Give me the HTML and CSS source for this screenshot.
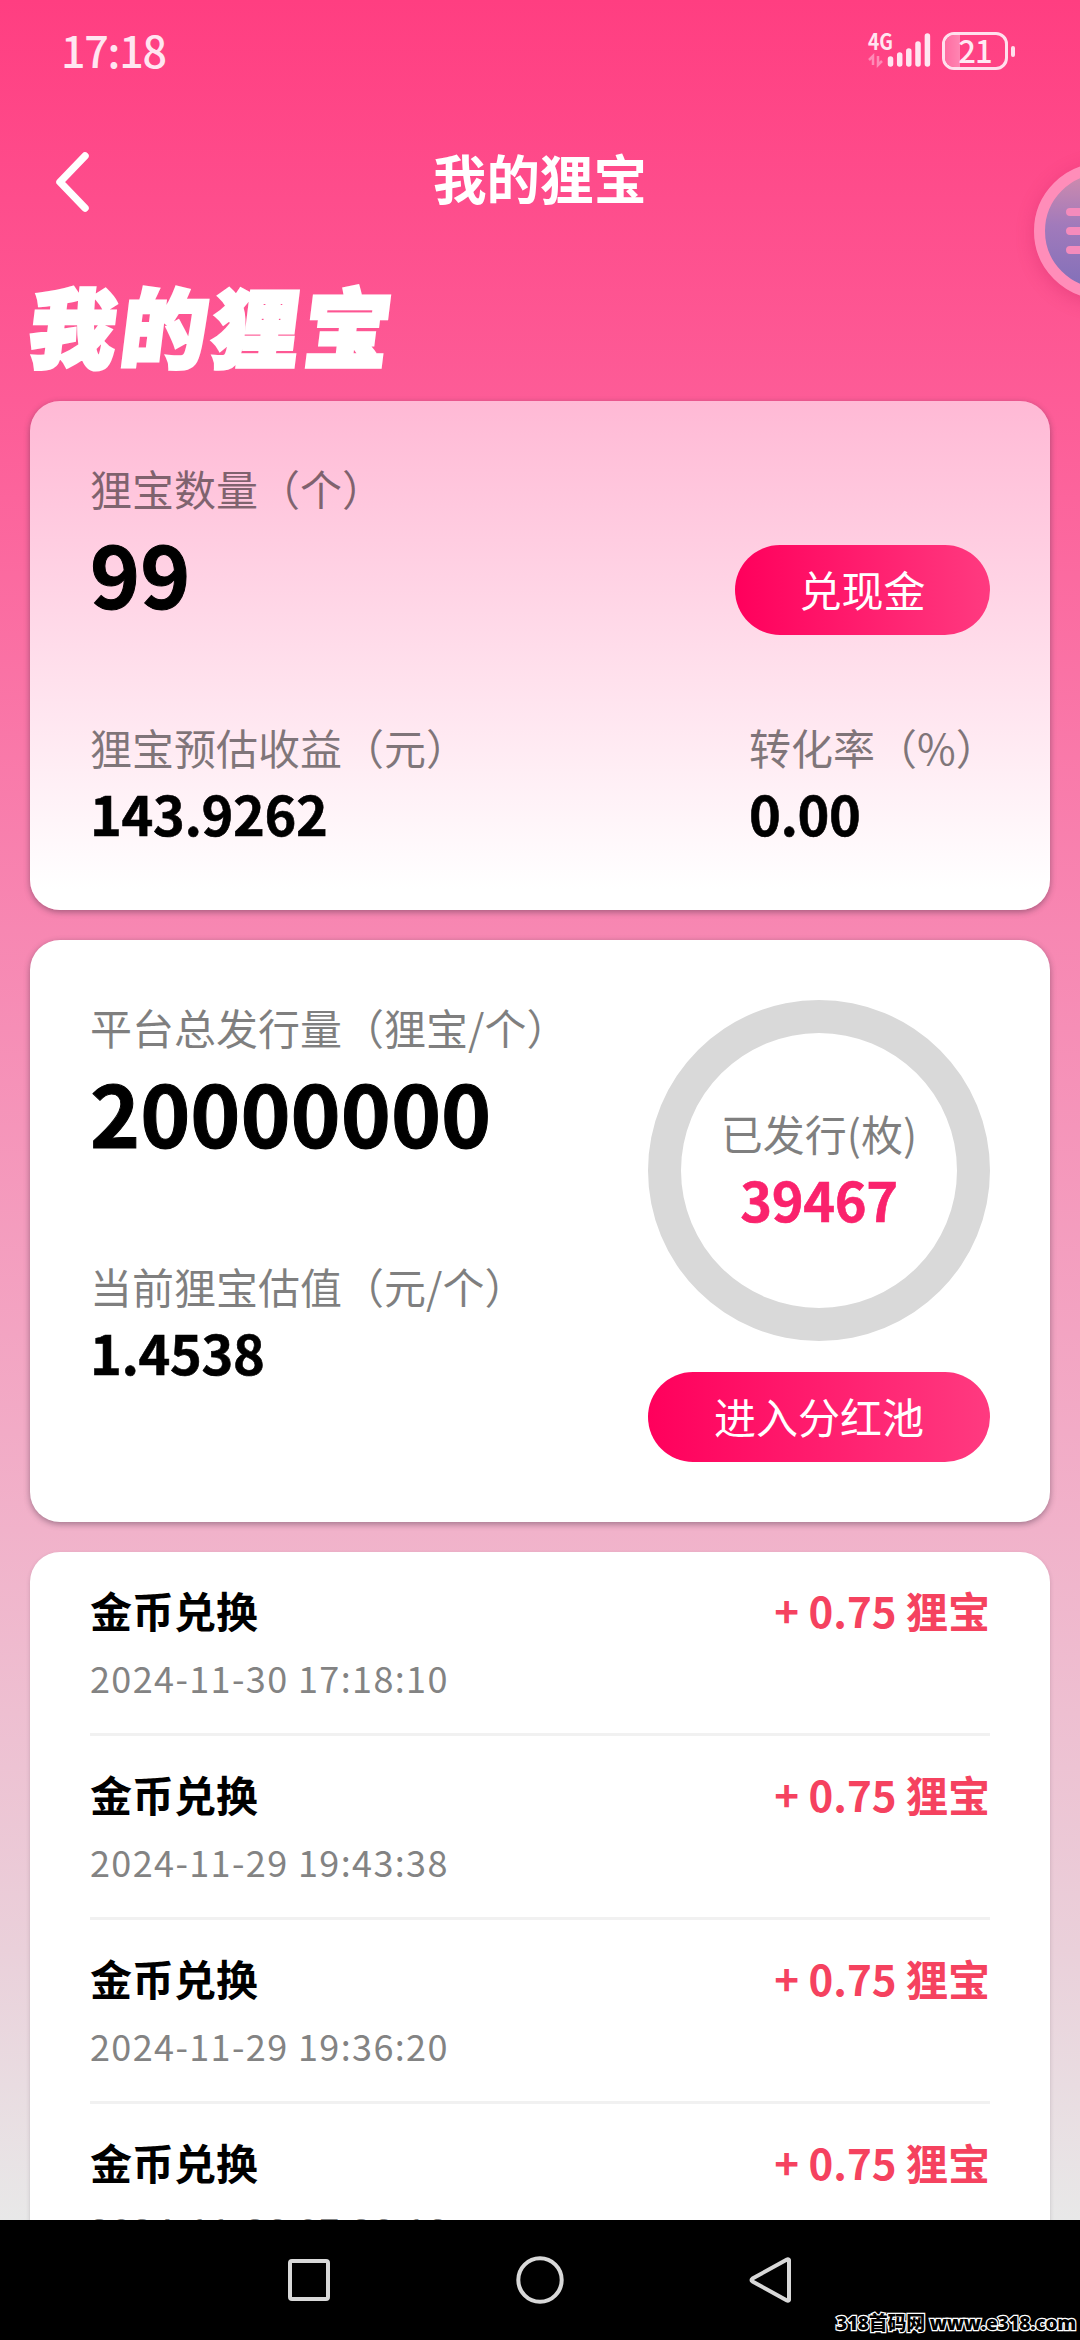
FILE: index.html
```html
<!DOCTYPE html>
<html lang="zh-CN">
<head>
<meta charset="utf-8">
<title>我的狸宝</title>
<link rel="stylesheet" href="styles.css">
</head>
<body>
<div class="screen">
  <header class="status-bar">
    <span class="clock">17:18</span>
    <div class="indicators">
      <svg class="signal" width="64" height="40" viewBox="0 0 64 40">
        <text class="network" x="0" y="19" textLength="25" lengthAdjust="spacingAndGlyphs">4G</text>
        <g class="traffic"><path d="M1 29l4-4v9M10 25v9l4-4"/></g>
        <g class="bars"><path d="M22.5 28v5M31.7 24v9M40.8 20v13M50 13v20M59.4 5v28"/></g>
      </svg>
      <div class="battery"><span class="battery-level"></span><span class="battery-text">21</span></div>
      <span class="battery-tip"></span>
    </div>
  </header>

  <nav class="title-bar">
    <svg class="back" width="40" height="64" viewBox="0 0 40 64"><path d="M33 6L8 32l25 26"/></svg>
    <h1 class="page-title">我的狸宝</h1>
  </nav>

  <main class="content">
    <h2 class="banner">我的狸宝</h2>

    <section class="card balance">
      <div class="row top">
        <div class="stat">
          <span class="label">狸宝数量（个）</span>
          <span class="big">99</span>
        </div>
        <button class="pill cash">兑现金</button>
      </div>
      <div class="row bottom">
        <div class="stat">
          <span class="label">狸宝预估收益（元）</span>
          <span class="value">143.9262</span>
        </div>
        <div class="stat rate">
          <span class="label">转化率（%）</span>
          <span class="value">0.00</span>
        </div>
      </div>
    </section>

    <section class="card supply">
      <div class="supply-stats">
        <div class="stat">
          <span class="label">平台总发行量（狸宝/个）</span>
          <span class="big">20000000</span>
        </div>
        <div class="stat">
          <span class="label">当前狸宝估值（元/个）</span>
          <span class="value">1.4538</span>
        </div>
      </div>
      <div class="issued">
        <div class="ring">
          <span class="label">已发行(枚)</span>
          <span class="value pink">39467</span>
        </div>
        <button class="pill">进入分红池</button>
      </div>
    </section>

    <section class="card history">
      <article class="entry">
        <div class="entry-main"><span>金币兑换</span><span class="amount">+ 0.75 狸宝</span></div>
        <time class="date">2024-11-30 17:18:10</time>
      </article>
      <article class="entry">
        <div class="entry-main"><span>金币兑换</span><span class="amount">+ 0.75 狸宝</span></div>
        <time class="date">2024-11-29 19:43:38</time>
      </article>
      <article class="entry">
        <div class="entry-main"><span>金币兑换</span><span class="amount">+ 0.75 狸宝</span></div>
        <time class="date">2024-11-29 19:36:20</time>
      </article>
      <article class="entry">
        <div class="entry-main"><span>金币兑换</span><span class="amount">+ 0.75 狸宝</span></div>
        <time class="date">2024-11-28 07:28:18</time>
      </article>
    </section>
  </main>

  <footer class="system-nav">
    <svg width="50" height="50" viewBox="0 0 50 50"><rect x="6" y="6" width="38" height="38" rx="2"/></svg>
    <svg width="50" height="50" viewBox="0 0 50 50"><circle cx="25" cy="25" r="21.7"/></svg>
    <svg width="50" height="50" viewBox="0 0 50 50"><path d="M43 5v40q-1 1-2 0.500L6.500 26.500q-2-1.500 0-3L41 4.500q1-.5 2 .5z"/></svg>
  </footer>

  <div class="float-ball">
    <svg width="60" height="60" viewBox="0 0 60 60"><path d="M6 11h48M6 30h48M6 49h48"/></svg>
  </div>
  <div class="watermark">318首码网 www.e318.com</div>
</div>
</body>
</html>
```
FILE: styles.css
```css
* { box-sizing: border-box; }

body {
  margin: 0;
  font-family: "Noto Sans CJK SC", "Noto Sans", sans-serif;
  color: #000;
}

.screen {
  position: relative;
  display: flex;
  flex-direction: column;
  width: 1080px;
  height: 2340px;
  overflow: hidden;
  background: linear-gradient(180deg, #ff3e81 0, #fd5c97 400px, #f787b2 930px, #f1b2ca 1530px, #ead0da 1950px, #e8e8e8 2220px);
}

.status-bar {
  display: flex;
  align-items: flex-start;
  justify-content: space-between;
  flex: none;
  height: 102px;
  padding: 0 65px 0 61px;
}

.clock {
  margin-top: 17px;
  font-size: 43px;
  font-weight: 500;
  line-height: 64px;
  letter-spacing: -1.200px;
  color: #ffe6f1;
}

.indicators { display: flex; align-items: center; padding-top: 31px; }
.signal { display: block; margin-right: 10px; overflow: visible; }
.network { font-size: 22px; font-weight: 700; fill: #ffe6f1; }
.traffic path { fill: none; stroke: #ff8ab6; stroke-width: 2.500; }
.bars path { fill: none; stroke: #ffe6f1; stroke-width: 5.500; stroke-linecap: round; }

.battery {
  display: flex;
  align-items: center;
  justify-content: center;
  width: 66px;
  height: 38px;
  border: 3px solid #ffe0ed;
  border-radius: 12px;
  position: relative;
}
.battery-level {
  position: absolute;
  inset: 0 auto 0 0;
  width: 15px;
  border-radius: 9px 0 0 9px;
  background: linear-gradient(90deg, #ff6da2, #ff85b2);
}
.battery-text { position: relative; font-size: 31px; font-weight: 500; line-height: 46px; color: #ffeaf3; letter-spacing: -.8px; margin-top: -3px; }
.battery-tip { width: 4px; height: 11px; margin-left: 3px; border-radius: 2px; background: #ffe0ed; }

.title-bar {
  display: grid;
  grid-template-columns: 40px 1fr 40px;
  align-items: center;
  flex: none;
  height: 160px;
  padding: 0 52px;
}
.back path { fill: none; stroke: #fff; stroke-width: 7.500; stroke-linecap: round; stroke-linejoin: round; }
.page-title {
  margin: 0;
  padding-bottom: 10px;
  font-size: 53.500px;
  font-weight: 700;
  line-height: 80px;
  text-align: center;
  color: #fff;
}

.content { display: flex; flex-direction: column; flex: 1; min-height: 0; padding: 0 30px; overflow: hidden; }

.banner {
  flex: none;
  align-self: flex-start;
  height: 109px;
  margin: 0 0 30px 2px;
  padding-top: 10px;
  font-size: 86px;
  font-weight: 900;
  line-height: 104px;
  letter-spacing: 5.500px;
  color: #fff;
  -webkit-text-stroke: 4px #fff;
  transform: skewX(-7deg);
}

.card {
  flex: none;
  border-radius: 30px;
  background: #fff;
  box-shadow: 0 2px 6px rgba(60, 40, 60, .45);
}

.label { font-size: 42px; font-weight: 400; line-height: 60px; color: rgba(0, 0, 0, .5); white-space: nowrap; }
.stat { display: flex; flex-direction: column; }
.big { font-size: 85px; font-weight: 700; line-height: 107px; margin-bottom: 5px; -webkit-text-stroke: 1px #000; }
.value { font-size: 54px; font-weight: 700; line-height: 72px; letter-spacing: -.4px; -webkit-text-stroke: .6px currentColor; }
.pink { color: #fa226c; }

.pill {
  display: flex;
  align-items: center;
  justify-content: center;
  width: 100%;
  height: 90px;
  padding: 0 0 3px;
  border: 0;
  border-radius: 45px;
  background: linear-gradient(90deg, #ff005c, #ff3a80);
  font: 400 42px/60px "Noto Sans CJK SC", sans-serif;
  color: #fff;
}

.balance {
  height: 509px;
  margin-bottom: 30px;
  padding: 57px 60px 0;
  background: linear-gradient(180deg, #ffb9d5, #fff 96%);
}
.row { display: flex; justify-content: space-between; }
.top { height: 259px; }
.cash { width: 255px; margin-top: 87px; }
.rate { width: 241px; }

.supply {
  display: flex;
  justify-content: space-between;
  height: 582px;
  margin-bottom: 30px;
  padding: 60px 60px 0;
}
.supply-stats { display: flex; flex-direction: column; gap: 87px; margin-top: -3px; }
.issued { display: flex; flex-direction: column; gap: 31px; width: 342px; }
.ring {
  display: flex;
  flex-direction: column;
  align-items: center;
  justify-content: center;
  width: 342px;
  height: 341px;
  padding-bottom: 4px;
  border: 33px solid #d9d9d9;
  border-radius: 50%;
}

.history { height: 800px; padding: 0 60px; box-shadow: 0 2px 4px rgba(60, 40, 60, .2); }
.entry { height: 184px; padding-top: 28px; border-bottom: 3px solid #f1f1f1; }
.entry-main { display: flex; justify-content: space-between; font-size: 42px; font-weight: 700; line-height: 60px; }
.amount { color: #f5425f; }
.date { display: block; margin-top: 11px; font-size: 36px; font-weight: 400; line-height: 52px; letter-spacing: 1.370px; color: #838383; }

.system-nav {
  display: flex;
  align-items: center;
  justify-content: center;
  flex: none;
  gap: 181px;
  height: 120px;
  background: #000;
}
.system-nav svg { fill: none; stroke: #d8d8d8; stroke-width: 4; stroke-linejoin: round; }

.float-ball {
  position: absolute;
  left: 1034px;
  top: 163px;
  display: flex;
  align-items: center;
  width: 136px;
  height: 136px;
  padding-left: 19px;
  border: 11px solid #ff8db9;
  border-radius: 50%;
  background: linear-gradient(180deg, #cf8bad 0, #a17abb 45%, #8270b9 100%);
  box-shadow: 0 4px 18px rgba(190, 30, 90, .3);
}
.float-ball svg { flex: none; }
.float-ball path { fill: none; stroke: #f58bbc; stroke-width: 8; stroke-linecap: round; }

.watermark {
  position: absolute;
  right: 4px;
  bottom: 3px;
  font: 800 19px/28px "Open Sans", "Noto Sans CJK SC", sans-serif;
  letter-spacing: -.25px;
  white-space: nowrap;
  color: #000;
  -webkit-text-stroke: 2.500px #fff;
  paint-order: stroke fill;
}
```
